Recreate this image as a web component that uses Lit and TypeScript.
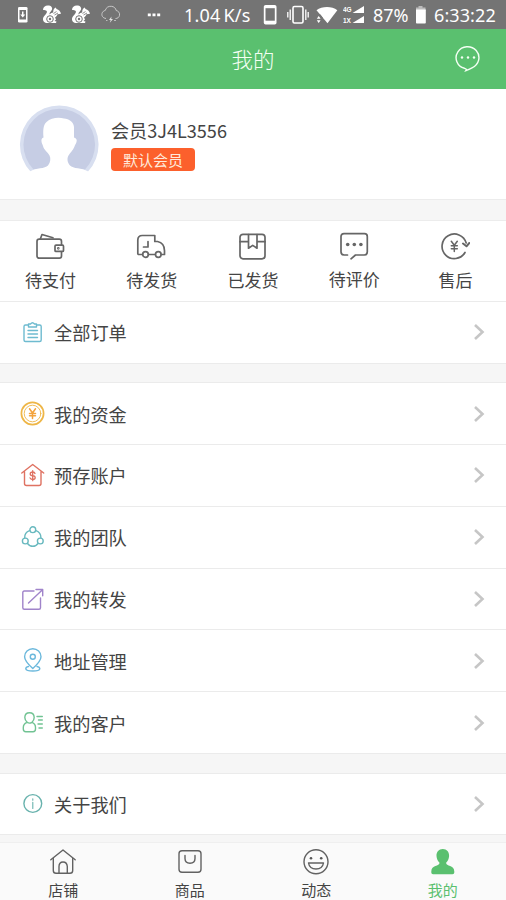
import { LitElement, html, css, svg, TemplateResult } from "lit";
import { customElement, property } from "lit/decorators.js";

const squirrel = svg`
  <path fill="#fff" d="M1 5C1 1.500 4 0 7 .6 10.200 1.200 11 4 9.300 5.800 8.300 7 7.200 8 7.500 9.500 8.500 8 10 7.500 11.300 7.400 10.800 5.500 12 3.500 13.800 2.600L14.500 4C17 4.500 18.500 6.500 19 8.800L15.500 9.300C14.800 11 14 12 13 12.500L14 14.500 12.500 16 14.500 16.600 14 18H4.500C1.500 17.500.5 15 1.200 12.800 1.800 11 4 9.500 4.800 7.500 5.300 6 4.500 5.200 1 5Z"/>
  <circle cx="8" cy="14" r="3.300" fill="none" stroke="#747474" stroke-width="1"/>
  <circle cx="8" cy="14" r="1.200" fill="#747474"/>
  <path d="M11.500 8.500 14.500 6.500M12.500 10 16 8" stroke="#747474" stroke-width=".8"/>`;

const statusIcons: Record<string, [number, number, TemplateResult]> = {
  download: [10, 16, svg`<rect x="0" y="0" width="9.500" height="15.500" rx="1.300" fill="#fff"/><path fill="#747474" d="M1.500 3h6.500v9.500H1.500z"/><path d="M4.750 4.500v4" stroke="#fff" stroke-width="1.500"/><path fill="#fff" d="M2.300 7.500h5L4.750 10.500z"/>`],
  squirrel: [20, 19, squirrel],
  cloud: [20, 19, svg`<path d="M5 13.500C1.500 13 .5 10.500 1 8.500 1.500 6.500 3 5.700 4.200 5.500 5 2.500 7.500 1 10.300 1.300 13 1.500 14.800 3.300 15.200 5.500 17.500 6 19 8 18.500 10.300 18.100 12.500 16.500 13.500 14.500 13.500" fill="none" stroke="#d0d0d0" stroke-width=".9"/><path d="M10.500 11.500 8 15H9.700L8.800 17.800 12 14H10.200z" fill="#e4e4e4"/><path d="M5 15.500h1.500M13 15.500h2" stroke="#bbb"/>`],
  dots: [14, 4, svg`<path fill="#fff" d="M.8.6h3v2.600h-3zM5.500.6h3v2.600h-3zM10.200.6h3v2.600h-3z"/>`],
  phone: [14, 20, svg`<rect x=".8" y="0" width="12.700" height="19.500" rx="1.800" fill="#fff"/><path fill="#747474" d="M2.500 3.200h9.300v12.500H2.500z"/>`],
  vibrate: [22, 20, svg`<rect x="6" y="1.500" width="10" height="16.500" rx="1.500" fill="none" stroke="#fff" stroke-width="1.600"/><path d="M3.200 4.500v10.500M.8 7v5.500M18.800 4.500v10.500M21.200 7v5.500" stroke="#fff" stroke-width="1.300"/>`],
  wifi: [22, 18, svg`<path fill="#fff" d="M.5 4.200C6 0 16 0 21.300 4.200L11.500 17.200.5 4.200Z"/><path fill="#747474" d="M0 8.500H4.500L7 12V18H0z"/><path fill="#fff" d="M.8 12.700h3.800L2.700 10zM.8 14.200h3.800L2.700 17z"/>`],
  signal: [22, 19, svg`<path fill="#fff" d="M21 1v7H9.500zM21 11v7H9.500z"/><text x="0" y="7" class="net">4G</text><text x="0" y="18" class="net">1X</text>`],
  battery: [12, 18, svg`<path fill="#bbb" d="M3.500 0h4v1.500h3V5H1V1.500h2.500z"/><path fill="#fff" d="M1 3.500h9.800v13.200q0 .8-.8.8H1.800q-.8 0-.8-.8z"/>`],
};

const orderIcons: Record<string, TemplateResult> = {
  wallet: svg`<rect x="2" y="8.200" width="24.500" height="19" rx="2.200"/><path d="M5.500 7.500 7 3.500 18 6.800"/><rect x="20" y="14.200" width="8.500" height="6.200" rx="1" fill="#fff"/><circle cx="23.300" cy="17.300" r=".5"/>`,
  truck: svg`<path d="M6.500 23.500H2.800q-1 0-1-1V9.200q0-4.700 4.500-4.700H18.800V10.500H21.500q7 1.500 7 9.200v3.800H25.300M12.500 23.500H19.300M12 10.500v5.500H7.500"/><circle cx="9.500" cy="23.500" r="2.800"/><circle cx="22.300" cy="23.500" r="2.800"/>`,
  parcel: svg`<rect x="3" y="3.300" width="25" height="24.500" rx="3"/><path d="M3 10.700H11.500M20 10.700H28M11.500 3.500V17.200L15.700 14.400 20 17.200V3.500"/>`,
  review: svg`<path d="M8.500 24H5.200Q2 24 2 20.800V5.500Q2 2.700 5 2.700H25.500Q28.300 2.700 28.300 5.500V20.800Q28.300 24 25.300 24H16.500L12 27.800"/><g fill="#666" stroke="none"><circle cx="8.700" cy="13.500" r="1.800"/><circle cx="15.300" cy="13.500" r="1.800"/><circle cx="21.900" cy="13.500" r="1.800"/></g>`,
  refund: svg`<path d="M25 21.500A12.300 12.300 0 1 1 26.200 12"/><path d="M23 12.500 26.500 15.300 29.300 12" stroke-width="2"/><path d="M11.300 10.300 14.300 14.300 17.300 10.300M14.300 14.300V20.500M11.300 14.800H17.300M11.300 17.700H17.300" stroke-width="1.500"/>`,
};

const rowIcons: Record<string, [string, TemplateResult]> = {
  clipboard: ["#6ebbd0", svg`<path d="M8 5H5.500Q4 5 4 6.500V20Q4 21.500 5.500 21.500H19.700Q21.200 21.500 21.200 20V6.500Q21.200 5 19.700 5H17M8.500 7V4H10.500Q12.500 1.500 14.500 4H16.500V7Z"/><path d="M8 10.500H17.500M8 14H17.500M8 17.500H17.500"/>`],
  coin: ["#eeb647", svg`<circle cx="12.500" cy="12.500" r="11.100" stroke-width="1.700"/><circle cx="12.500" cy="12.500" r="8.300" stroke-width=".9"/><path d="M9.500 7.800 12.500 12 15.500 7.800M12.500 12V17.500M9.500 12.400H15.500M9.500 14.700H15.500" stroke="#f3a33c" stroke-width="1.500"/>`],
  house: ["#df7262", svg`<path d="M1.800 10 12.700 1.500 23.700 10M4.500 8.500V20.500Q4.500 22.500 6.500 22.500H19Q21 22.500 21 20.500V8.500"/><path d="M15 10.500Q14.500 9 12.700 9 10.200 9 10.200 10.900 10.200 12.400 12.700 12.700 15.200 13 15.200 14.700 15.200 16.500 12.700 16.500 10.500 16.500 10 14.900M12.700 7.700V17.700" stroke-width="1.300"/>`],
  team: ["#69b9bf", svg`<circle cx="12.800" cy="4.700" r="2.900"/><circle cx="5.300" cy="16" r="2.900"/><circle cx="20.300" cy="16" r="2.900"/><path d="M9.500 5.700Q4.500 7.500 4.700 12.800M16 5.700Q21 7.500 20.900 12.800M7.500 18.500Q9.500 21.300 12.800 21.300 16 21.300 18 18.500"/>`],
  share: ["#a084ca", svg`<path d="M14 4H4.300Q2.800 4 2.800 5.500V20.700Q2.800 22.200 4.300 22.200H19Q20.500 22.200 20.500 20.700V11M8.500 16 22.500 2.800M16 2.500H22.700V8.700"/>`],
  pin: ["#6bb8dc", svg`<path d="M12.800 20.500Q4.600 13 4.600 8.700A8.200 8 0 0 1 21 8.700Q21 13 12.800 20.500Z"/><circle cx="12.800" cy="8.800" r="2.500"/><path d="M8.500 18.500Q5.800 19 5.800 20.800 6.300 23 12.800 23 19.300 23 19.800 20.800 19.800 19 17 18.500"/>`],
  customer: ["#71c393", svg`<path d="M7.200 12.300Q4.800 10 4.800 7.500 5 2.700 9.500 2.700 14 2.700 14.200 7.500 14.200 10 12 12.300 15.500 13.500 15.500 17.500V19Q15.500 21.700 13 21.700H5.800Q3.300 21.700 3.300 19V17.500Q3.300 13.500 7.200 12.300ZM7.200 12.300Q9.500 14 12 12.300M17 6.500H22.300M18.500 10H22.300M18 14H22.300M19 18H22.300"/>`],
  info: ["#68b2ad", svg`<circle cx="12.800" cy="12.500" r="8.900"/><path d="M12.800 11.200V17.500M12.800 7.700V9.200" stroke-width="1.100"/>`],
};

const tabIcons: Record<string, TemplateResult> = {
  shop: svg`<path d="M2.800 10.800 15 1 27.200 10.800"/><path d="M5.300 9.500V21.500Q5.300 24.300 8 24.300H22Q24.700 24.300 24.700 21.500V9.500M11 24.300V17.500Q11 13 15 13T19.300 17.500V24.300"/>`,
  goods: svg`<rect x="4" y="1.800" width="22" height="21.500" rx="3"/><path d="M10 6.500V9.500Q10 14.200 15 14.200T20 9.500V6.500"/>`,
  feed: svg`<circle cx="15" cy="12.700" r="12"/><path d="M7.500 14H22.500Q21.500 20 15 20T7.500 14Z"/><g fill="#555" stroke="none"><circle cx="10" cy="9.300" r="1.300"/><circle cx="20.200" cy="9.300" r="1.300"/></g>`,
  me: svg`<path fill="#5ac06f" stroke="none" d="M14.800 0C18.800 0 21.300 3 21.100 7 21 10 19.600 12.300 18.100 13.800 18 17.500 26.300 16 26.300 22.500V23.500Q26.300 25.200 24.500 25.200H5Q3.300 25.200 3.300 23.500V22.500C3.300 16 11.600 17.500 11.500 13.800 10 12.300 8.600 10 8.500 7 8.300 3 10.800 0 14.800 0Z"/>`,
};

@customElement("status-bar")
class StatusBar extends LitElement {
  static styles = css`
    :host {
      display: grid;
      grid-template-columns: 24px 29px 30px 46px 37px 79px 24px 29px 27px 30px 42px 19px 1fr;
      align-items: center;
      height: 29px;
      padding-left: 18px;
      background: #747474;
      color: #fff;
      font: 18px/29px "Noto Sans", sans-serif;
      white-space: nowrap;
    }
    svg { display: block; }
    span { padding-top: 2px; line-height: 27px; }
    .net { font: bold 6.5px "Liberation Sans", sans-serif; fill: #fff; }
    .speed { letter-spacing: 0.2px; word-spacing: -2px; }
    .time { letter-spacing: 0.1px; }
  `;
  icon(name: string) {
    const [w, h, art] = statusIcons[name];
    return html`<svg width=${w} height=${h} viewBox="0 0 ${w} ${h}">${art}</svg>`;
  }
  render() {
    return html`
      ${["download", "squirrel", "squirrel", "cloud", "dots"].map((n) => this.icon(n))}
      <span class="speed">1.04 K/s</span>
      ${["phone", "vibrate", "wifi", "signal"].map((n) => this.icon(n))}
      <span>87%</span>
      ${this.icon("battery")}
      <span class="time">6:33:22</span>
    `;
  }
}

@customElement("menu-row")
class MenuRow extends LitElement {
  @property() icon = "";
  @property() label = "";
  static styles = css`
    :host {
      display: flex;
      align-items: center;
      height: 61.8px;
      box-sizing: border-box;
      padding: 0 20px;
      border-bottom: 1px solid #ebebeb;
      background: #fff;
    }
    .icon { width: 25px; height: 25px; fill: none; stroke-width: 1.4; stroke-linecap: round; stroke-linejoin: round; }
    .label { flex: 1; margin-left: 9px; font-size: 18.2px; line-height: 26px; }
    .chevron { width: 14px; height: 18px; fill: none; stroke: #c6c6c6; stroke-width: 2.6; }
  `;
  render() {
    const [color, art] = rowIcons[this.icon];
    return html`
      <svg class="icon" viewBox="0 0 25 25" stroke=${color}>${art}</svg>
      <span class="label">${this.label}</span>
      <svg class="chevron" viewBox="0 0 14 18"><path d="M3 2 10.500 9 3 16" /></svg>
    `;
  }
}

@customElement("app-root")
class AppRoot extends LitElement {
  static styles = css`
    :host {
      display: flex;
      flex-direction: column;
      height: 900px;
      overflow: hidden;
      background: #f6f6f6;
      color: #444;
      font-family: "Noto Sans CJK SC", sans-serif;
    }
    .header {
      display: grid;
      grid-template-columns: 1fr auto 1fr;
      align-items: center;
      flex: none;
      height: 60px;
      background: #5ac06f;
      color: #f4fff4;
    }
    .title { font-size: 21.5px; line-height: 30px; font-weight: 300; }
    .chat { justify-self: end; margin-right: 25px; margin-bottom: 2px; fill: none; stroke: #f4fff4; stroke-width: 1.4; }
    .profile {
      display: flex;
      flex: none;
      box-sizing: border-box;
      height: 111px;
      padding: 15px 20px 0 19px;
      border-bottom: 1px solid #ececec;
      background: #fff;
    }
    .who { margin: 13px 0 0 12px; }
    .name { font-size: 18.1px; line-height: 26px; height: 31px; }
    .badge {
      width: 84px;
      height: 23px;
      border-radius: 4px;
      background: #fc602c;
      color: #ffeadb;
      font-size: 15px;
      line-height: 23px;
      text-align: center;
    }
    .orders {
      display: grid;
      grid-template-columns: repeat(5, 1fr);
      flex: none;
      box-sizing: border-box;
      height: 82px;
      margin-top: 20px;
      padding-top: 10px;
      border-top: 1px solid #ececec;
      border-bottom: 1px solid #ebebeb;
      background: #fff;
    }
    .order { display: flex; flex-direction: column; align-items: center; font-size: 17px; line-height: 24px; }
    .order svg { width: 30px; height: 30px; margin: 0 1px 7px 0; fill: none; stroke: #666; stroke-width: 1.7; stroke-linecap: round; stroke-linejoin: round; }
    .order.raised svg { margin-bottom: 6px; }
    .group { flex: none; box-sizing: border-box; border-top: 1px solid #ebebeb; margin-top: 18.5px; }
    .group.joined { margin-top: 0; border-top: 0; }
    .tabs {
      display: grid;
      grid-template-columns: repeat(4, 1fr);
      flex: none;
      box-sizing: border-box;
      height: 58px;
      margin-top: auto;
      padding-top: 6px;
      border-top: 1px solid #efefef;
      background: #fafafa;
    }
    .tab { display: flex; flex-direction: column; align-items: center; font-size: 15px; line-height: 20px; }
    .tab svg { width: 30px; height: 27px; margin: 0 0 4px 0; fill: none; stroke: #626262; stroke-width: 1.4; stroke-linecap: round; stroke-linejoin: round; }
    .tab.active { color: #5ac06f; }
  `;
  row([icon, label]: string[]) {
    return html`<menu-row .icon=${icon} .label=${label}></menu-row>`;
  }
  render() {
    const orders = [["wallet", "待支付"], ["truck", "待发货"], ["parcel", "已发货"], ["review", "待评价"], ["refund", "售后"]];
    const mine = [["coin", "我的资金"], ["house", "预存账户"], ["team", "我的团队"], ["share", "我的转发"], ["pin", "地址管理"], ["customer", "我的客户"]];
    const tabs = [["shop", "店铺"], ["goods", "商品"], ["feed", "动态"], ["me", "我的"]];
    return html`
      <status-bar></status-bar>
      <div class="header">
        <span></span>
        <span class="title">我的</span>
        <svg class="chat" width="26" height="27" viewBox="0 0 26 27">
          <path d="M9.500 23.300A11.400 11 0 1 1 17 22.800Q14 24.300 11 25.500Q12 24 9.500 23.300Z" />
          <g fill="#f4fff4" stroke="none"><circle cx="7" cy="12.500" r="1.200" /><circle cx="13" cy="12.500" r="1.200" /><circle cx="19" cy="12.500" r="1.200" /></g>
        </svg>
      </div>
      <div class="profile">
        <svg width="80" height="68" viewBox="0 0 80 68">
          <path fill="#d8dff0" d="M11.500 67.500A39.300 39.300 0 1 1 69 67.500Z" />
          <path fill="#c6cde4" d="M14.500 65.500A35.800 35.800 0 1 1 66 65.500Z" />
          <path fill="#fff" d="M11 68V67.500C17 63.500 26 65 29 61.500 31.500 58 32 54.500 30.500 51.500 28.500 48 25 46 24 42 23.500 40 22.700 39.500 22.500 37.500 22.200 35.500 22.800 34 24.500 33.500 24 27 24 21 27.500 18 32 13.500 40 13 45 14.500 50 15 54.500 17.500 55 23V33.500C57.500 34 58.200 36 57.500 38 57 40 56 40.500 55.500 42.500 54 46.500 51 48.500 49.500 51.500 48 54 48 58 51 61.500 54 65 63 63.500 69 67.500V68Z" />
        </svg>
        <div class="who">
          <div class="name">会员3J4L3556</div>
          <div class="badge">默认会员</div>
        </div>
      </div>
      <div class="orders">
        ${orders.map(([icon, label]) => html`
          <div class="order ${icon === "review" ? "raised" : ""}">
            <svg viewBox="0 0 30 30">${orderIcons[icon]}</svg><span>${label}</span>
          </div>`)}
      </div>
      <div class="group joined">${this.row(["clipboard", "全部订单"])}</div>
      <div class="group">${mine.map((m) => this.row(m))}</div>
      <div class="group">${this.row(["info", "关于我们"])}</div>
      <div class="tabs">
        ${tabs.map(([icon, label]) => html`
          <div class="tab ${icon === "me" ? "active" : ""}">
            <svg viewBox="0 0 30 27">${tabIcons[icon]}</svg><span>${label}</span>
          </div>`)}
      </div>
    `;
  }
}
